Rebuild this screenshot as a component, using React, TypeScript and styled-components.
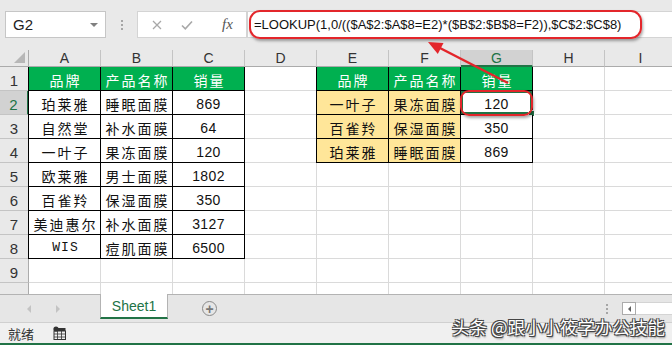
import React from "react";
import styled, { createGlobalStyle, css } from "styled-components";

const GlobalStyle = createGlobalStyle`
  html, body { margin: 0; padding: 0; background: #fff; }
  body { font-family: "Liberation Sans", "Noto Sans CJK SC", sans-serif; overflow: hidden; }
`;

const GREEN = "#217346";
const RED = "#e3262b";

const Frame = styled.div`
  position: relative;
  width: 672px;
  height: 345px;
  overflow: hidden;
  display: flex;
  flex-direction: column;
  background: #e9e9e9;
`;

const TopStrip = styled.div`
  height: 11px;
  flex: none;
`;

const FormulaRow = styled.div`
  height: 27px;
  flex: none;
  display: flex;
  padding-left: 5px;
`;

const NameBox = styled.div`
  width: 101px;
  box-sizing: border-box;
  border: 1px solid #c6c6c6;
  background: #fff;
  display: flex;
  align-items: center;
  justify-content: space-between;
  padding: 0 7px 0 7px;
  font-size: 15px;
  color: #222;
`;

const Caret = styled.span`
  width: 0;
  height: 0;
  border-left: 4px solid transparent;
  border-right: 4px solid transparent;
  border-top: 4px solid #808080;
`;

const Grip = styled.div<{ $w: number }>`
  width: ${(p) => p.$w}px;
  flex: none;
  display: flex;
  flex-direction: column;
  align-items: center;
  justify-content: center;
  gap: 2px;
`;

const GripDot = styled.span`
  width: 2px;
  height: 2px;
  background: #a6a6a6;
`;

const FxBox = styled.div`
  width: 110px;
  flex: none;
  box-sizing: border-box;
  border: 1px solid #d4d4d4;
  background: #fff;
  display: flex;
  align-items: center;
  padding-left: 14px;
  gap: 19px;
`;

const FxLabel = styled.span`
  font-family: "Liberation Serif", serif;
  font-style: italic;
  font-size: 15px;
  color: #555;
  margin-left: 10px;
`;

const FormulaInput = styled.div`
  flex: 1;
  box-sizing: border-box;
  border: 1px solid #d4d4d4;
  border-right: none;
  background: #fff;
  display: flex;
  align-items: center;
  padding-left: 6px;
  font-size: 13px;
  color: #111;
  white-space: nowrap;
`;

const Spacer = styled.div`
  height: 12px;
  flex: none;
`;

const Sheet = styled.div`
  flex: none;
  height: 244px;
  overflow: hidden;
  background: #fff;
  display: grid;
  grid-template-columns: 29px repeat(9, 72px);
  grid-template-rows: 17px repeat(10, 24px);
`;

const Corner = styled.div`
  position: relative;
  box-sizing: border-box;
  border-right: 1px solid #ababab;
  border-bottom: 1px solid #ababab;
  background: #e9e9e9;
  &::after {
    content: "";
    position: absolute;
    right: 3px;
    bottom: 3px;
    width: 0;
    height: 0;
    border-left: 11px solid transparent;
    border-bottom: 11px solid #b7b7b7;
  }
`;

const ColHeader = styled.div<{ $sel?: boolean }>`
  box-sizing: border-box;
  border-right: 1px solid #c4c4c4;
  border-bottom: 1px solid #ababab;
  background: #e9e9e9;
  display: flex;
  align-items: center;
  justify-content: center;
  font-size: 14px;
  color: #333;
  ${(p) =>
    p.$sel &&
    css`
      background: #d2d2d2;
      color: ${GREEN};
      border-bottom: 2px solid ${GREEN};
    `}
`;

const RowHeader = styled.div<{ $sel?: boolean }>`
  box-sizing: border-box;
  border-right: 1px solid #ababab;
  border-bottom: 1px solid #c4c4c4;
  background: #e9e9e9;
  display: flex;
  align-items: center;
  justify-content: center;
  padding-top: 4px;
  font-size: 15px;
  color: #333;
  ${(p) =>
    p.$sel &&
    css`
      background: #d2d2d2;
      color: ${GREEN};
      border-right: 2px solid ${GREEN};
    `}
`;

const CellsArea = styled.div`
  grid-column: 2 / -1;
  grid-row: 2 / -1;
  background-image: linear-gradient(to left, #dadada 1px, transparent 1px),
    linear-gradient(to top, #dadada 1px, transparent 1px);
  background-size: 72px 100%, 100% 24px;
`;

const Table = styled.div<{ $col: string; $row: string }>`
  grid-column: ${(p) => p.$col};
  grid-row: ${(p) => p.$row};
  display: grid;
  grid-template-columns: repeat(3, 72px);
  grid-auto-rows: 24px;
  box-shadow: -1px 0 0 #000;
`;

type Kind = "head" | "key" | "plain";

const Cell = styled.div<{ $kind: Kind; $num?: boolean; $mono?: boolean; $sel?: boolean }>`
  position: relative;
  box-sizing: border-box;
  border-right: 1px solid #000;
  border-bottom: 1px solid #000;
  display: flex;
  align-items: center;
  justify-content: center;
  padding-top: 2px;
  font-family: "Noto Sans CJK SC", "Liberation Sans", sans-serif;
  font-size: 14px;
  letter-spacing: 2px;
  padding-left: 2px;
  color: #111;
  background: ${(p) => (p.$kind === "head" ? "#00b050" : p.$kind === "key" ? "#ffe699" : "#fff")};
  ${(p) => p.$kind === "head" && css`color: #fff;`}
  ${(p) =>
    p.$num &&
    css`
      font-family: "Liberation Sans", sans-serif;
      font-size: 14px;
      letter-spacing: 0.4px;
      padding-left: 0;
    `}
  ${(p) =>
    p.$mono &&
    css`
      font-family: "Liberation Mono", monospace;
      font-size: 13px;
      letter-spacing: 1px;
    `}
  ${(p) =>
    p.$sel &&
    css`
      box-shadow: inset 0 0 0 2px ${GREEN};
      &::after {
        content: "";
        position: absolute;
        right: -3px;
        bottom: -3px;
        width: 5px;
        height: 5px;
        background: ${GREEN};
        border: 1px solid #fff;
      }
    `}
`;

const TabBar = styled.div`
  height: 28px;
  flex: none;
  box-sizing: border-box;
  border-top: 1px solid #b3b3b3;
  background: #e6e6e6;
  display: flex;
  align-items: stretch;
`;

const NavArea = styled.div`
  width: 100px;
  flex: none;
  display: flex;
  align-items: center;
  padding-left: 27px;
  gap: 25px;
  box-sizing: border-box;
`;

const NavArrow = styled.span<{ $dir: "l" | "r" }>`
  width: 0;
  height: 0;
  border-top: 4px solid transparent;
  border-bottom: 4px solid transparent;
  ${(p) => (p.$dir === "l" ? "border-right: 4px solid #c3c3c3;" : "border-left: 4px solid #c3c3c3;")}
`;

const SheetTab = styled.div`
  width: 68px;
  flex: none;
  box-sizing: border-box;
  margin-top: -1px;
  margin-bottom: 3px;
  background: #fff;
  border-left: 1px solid #b3b3b3;
  border-right: 1px solid #b3b3b3;
  border-bottom: 2px solid ${GREEN};
  display: flex;
  align-items: center;
  justify-content: center;
  font-size: 14px;
  color: ${GREEN};
`;

const AddButton = styled.div`
  margin-left: 34px;
  align-self: center;
  width: 15px;
  height: 15px;
  box-sizing: border-box;
  border: 1.5px solid #8a8a8a;
  border-radius: 50%;
  display: flex;
  align-items: center;
  justify-content: center;
  color: #777;
  font-size: 14px;
  font-weight: bold;
  line-height: 1;
`;

const ScrollGroup = styled.div`
  margin-left: auto;
  display: flex;
  align-items: center;
`;

const ScrollLeft = styled.div`
  width: 14px;
  height: 13px;
  box-sizing: border-box;
  border: 1px solid #ababab;
  background: #fff;
  display: flex;
  align-items: center;
  justify-content: center;
  margin-left: 14px;
`;

const ScrollTrack = styled.div`
  width: 36px;
  height: 13px;
  background: #fff;
  border-top: 1px solid #d4d4d4;
  border-bottom: 1px solid #d4d4d4;
  box-sizing: border-box;
`;

const SmallArrow = styled.span`
  width: 0;
  height: 0;
  border-top: 3px solid transparent;
  border-bottom: 3px solid transparent;
  border-right: 3px solid #606060;
`;

const StatusBar = styled.div`
  height: 23px;
  flex: none;
  box-sizing: border-box;
  border-top: 1px solid #d0d0d0;
  border-bottom: 2px solid ${GREEN};
  background: #f0f0f0;
  display: flex;
  align-items: center;
  padding-left: 8px;
  gap: 19px;
  font-family: "Noto Sans CJK SC", sans-serif;
  font-size: 13px;
  color: #333;
`;

const FormulaCircle = styled.div`
  position: absolute;
  left: 249px;
  top: 10px;
  width: 393px;
  height: 29px;
  box-sizing: border-box;
  border: 2.5px solid ${RED};
  border-radius: 11px;
  box-shadow: 1px 2px 3px rgba(0, 0, 0, 0.35);
  pointer-events: none;
`;

const CellCircle = styled.div`
  position: absolute;
  left: 460px;
  top: 90px;
  width: 73px;
  height: 26px;
  box-sizing: border-box;
  border: 2.5px solid ${RED};
  border-radius: 9px;
  box-shadow: 1px 2px 3px rgba(0, 0, 0, 0.35);
  pointer-events: none;
`;

const ArrowSvg = styled.svg`
  position: absolute;
  left: 0;
  top: 0;
  pointer-events: none;
`;

const Watermark = styled.div`
  position: absolute;
  left: 452px;
  top: 314px;
  font-family: "Noto Sans CJK SC", sans-serif;
  font-size: 17.5px;
  color: #fff;
  white-space: nowrap;
  text-shadow: 1px 1px 0 #444, -1px -1px 0 #444, 1px -1px 0 #444, -1px 1px 0 #444, 1px 2px 2px rgba(0, 0, 0, 0.5);
  pointer-events: none;
`;

const COLS = ["A", "B", "C", "D", "E", "F", "G", "H", "I"];

const table1: [string, string, string][] = [
  ["珀莱雅", "睡眠面膜", "869"],
  ["自然堂", "补水面膜", "64"],
  ["一叶子", "果冻面膜", "120"],
  ["欧莱雅", "男士面膜", "1802"],
  ["百雀羚", "保湿面膜", "350"],
  ["美迪惠尔", "补水面膜", "3127"],
  ["WIS", "痘肌面膜", "6500"],
];

const table2: [string, string, string][] = [
  ["一叶子", "果冻面膜", "120"],
  ["百雀羚", "保湿面膜", "350"],
  ["珀莱雅", "睡眠面膜", "869"],
];

const Heads = () => (
  <>
    <Cell $kind="head">品牌</Cell>
    <Cell $kind="head">产品名称</Cell>
    <Cell $kind="head">销量</Cell>
  </>
);

export default function App() {
  return (
    <Frame>
      <GlobalStyle />
      <TopStrip />
      <FormulaRow>
        <NameBox>
          G2
          <Caret />
        </NameBox>
        <Grip $w={31}>
          <GripDot />
          <GripDot />
          <GripDot />
        </Grip>
        <FxBox>
          <svg width="10" height="10" viewBox="0 0 10 10">
            <path d="M1 1L9 9M9 1L1 9" stroke="#a8a8a8" strokeWidth="1.3" fill="none" />
          </svg>
          <svg width="12" height="10" viewBox="0 0 12 10">
            <path d="M1 5.5L4.3 8.8L11 1.5" stroke="#a8a8a8" strokeWidth="1.6" fill="none" />
          </svg>
          <FxLabel>fx</FxLabel>
        </FxBox>
        <FormulaInput>=LOOKUP(1,0/(($A$2:$A$8=E2)*($B$2:$B$8=F2)),$C$2:$C$8)</FormulaInput>
      </FormulaRow>
      <Spacer />
      <Sheet>
        <Corner />
        {COLS.map((c) => (
          <ColHeader key={c} $sel={c === "G"}>
            {c}
          </ColHeader>
        ))}
        {Array.from({ length: 10 }, (_, i) => (
          <RowHeader key={i} $sel={i === 1} style={{ gridRow: i + 2, gridColumn: 1 }}>
            {i < 9 ? i + 1 : ""}
          </RowHeader>
        ))}
        <CellsArea />
        <Table $col="2 / 5" $row="2 / 10">
          <Heads />
          {table1.map((r, i) => (
            <React.Fragment key={i}>
              <Cell $kind="plain" $mono={r[0] === "WIS"}>
                {r[0]}
              </Cell>
              <Cell $kind="plain">{r[1]}</Cell>
              <Cell $kind="plain" $num>
                {r[2]}
              </Cell>
            </React.Fragment>
          ))}
        </Table>
        <Table $col="6 / 9" $row="2 / 6">
          <Heads />
          {table2.map((r, i) => (
            <React.Fragment key={i}>
              <Cell $kind="key">{r[0]}</Cell>
              <Cell $kind="key">{r[1]}</Cell>
              <Cell $kind="plain" $num $sel={i === 0}>
                {r[2]}
              </Cell>
            </React.Fragment>
          ))}
        </Table>
      </Sheet>
      <TabBar>
        <NavArea>
          <NavArrow $dir="l" />
          <NavArrow $dir="r" />
        </NavArea>
        <SheetTab>Sheet1</SheetTab>
        <AddButton>+</AddButton>
        <ScrollGroup>
          <Grip $w={3}>
            <GripDot />
            <GripDot />
            <GripDot />
          </Grip>
          <ScrollLeft>
            <SmallArrow />
          </ScrollLeft>
          <ScrollTrack />
        </ScrollGroup>
      </TabBar>
      <StatusBar>
        <span>就绪</span>
        <svg width="13" height="14" viewBox="0 0 13 14">
          <circle cx="3" cy="3" r="2.6" fill="#333" />
          <rect x="1" y="5" width="11.5" height="8.5" fill="none" stroke="#333" strokeWidth="1" />
          <rect x="5" y="2" width="7.5" height="3" fill="#333" />
          <path d="M1 8H12.5M1 11H12.5M4.5 5V13.5M8.5 5V13.5" stroke="#333" strokeWidth="0.8" />
        </svg>
      </StatusBar>

      <FormulaCircle />
      <CellCircle />
      <ArrowSvg width="672" height="345" viewBox="0 0 672 345">
        <line x1="508" y1="83" x2="438" y2="47" stroke={RED} strokeWidth="2.5" />
        <polygon points="428,42 443.5,43 437.8,54" fill={RED} />
      </ArrowSvg>
      <Watermark>头条 @跟小小筱学办公技能</Watermark>
    </Frame>
  );
}
